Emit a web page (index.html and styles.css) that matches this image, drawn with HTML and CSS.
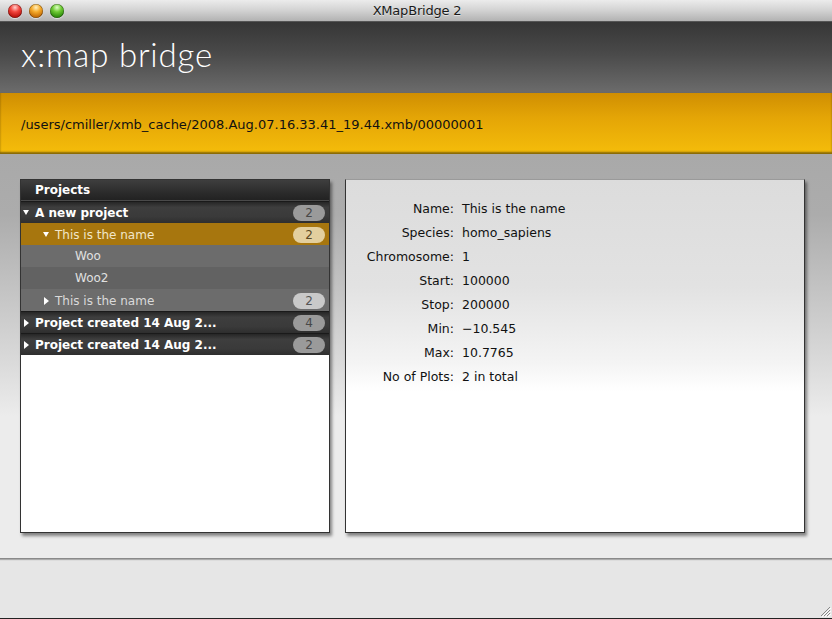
FILE: index.html
```html
<!DOCTYPE html>
<html>
<head>
<meta charset="utf-8">
<title>XMapBridge 2</title>
<link rel="stylesheet" href="styles.css">
</head>
<body>
<div class="window">
  <div class="titlebar">
    <div class="lights">
      <span class="light red"></span>
      <span class="light orange"></span>
      <span class="light green"></span>
    </div>
    <div class="title">XMapBridge 2</div>
  </div>
  <div class="brand"><h1>x:map bridge</h1></div>
  <div class="pathbar">/users/cmiller/xmb_cache/2008.Aug.07.16.33.41_19.44.xmb/00000001</div>
  <div class="main">
    <div class="tree">
      <div class="row head"><span class="label">Projects</span></div>
      <div class="row project open"><span class="tri down"></span><span class="label">A new project</span><span class="count">2</span></div>
      <div class="row child selected open"><span class="tri down"></span><span class="label">This is the name</span><span class="count">2</span></div>
      <div class="row leaf a"><span class="label">Woo</span></div>
      <div class="row leaf b"><span class="label">Woo2</span></div>
      <div class="row child"><span class="tri right"></span><span class="label">This is the name</span><span class="count">2</span></div>
      <div class="row project"><span class="tri right"></span><span class="label">Project created 14 Aug 2...</span><span class="count">4</span></div>
      <div class="row project"><span class="tri right"></span><span class="label">Project created 14 Aug 2...</span><span class="count">2</span></div>
    </div>
    <div class="details">
      <dl class="props">
        <dt>Name:</dt><dd>This is the name</dd>
        <dt>Species:</dt><dd>homo_sapiens</dd>
        <dt>Chromosome:</dt><dd>1</dd>
        <dt>Start:</dt><dd>100000</dd>
        <dt>Stop:</dt><dd>200000</dd>
        <dt>Min:</dt><dd>−10.545</dd>
        <dt>Max:</dt><dd>10.7765</dd>
        <dt>No of Plots:</dt><dd>2 in total</dd>
      </dl>
    </div>
  </div>
  <div class="footer">
    <svg class="grip" width="12" height="12" viewBox="0 0 12 12">
      <path d="M11 2 L2 11 M11 5 L5 11 M11 8 L8 11" stroke="#888" stroke-width="1" fill="none"/>
      <path d="M12 3 L3 12 M12 6 L6 12 M12 9 L9 12" stroke="#fff" stroke-width="1" fill="none"/>
    </svg>
  </div>
</div>
</body>
</html>
```
FILE: styles.css
```css
* { box-sizing: border-box; }
html, body { margin: 0; padding: 0; }
body { width: 832px; height: 619px; overflow: hidden; background: #e6e6e6; font-family: "DejaVu Sans", sans-serif; }

.window { width: 832px; height: 619px; display: flex; flex-direction: column; border-bottom: 1px solid #222; }

.titlebar {
  height: 22px; flex: none; position: relative;
  background: linear-gradient(#ececec, #d2d2d2 50%, #b2b2b2);
  border-bottom: 1px solid #555;
  display: flex; align-items: center; justify-content: center;
}
.lights { position: absolute; left: 8px; top: 4px; display: flex; gap: 7px; }
.light { width: 14px; height: 14px; border-radius: 50%; box-shadow: 0 0 0 0.5px rgba(0,0,0,.45) inset, 0 1px 1px rgba(255,255,255,.6); }
.light.red { background: radial-gradient(circle at 50% 25%, #ffd0cc 0, #f4473f 35%, #b8120c 75%, #d84038 100%); }
.light.orange { background: radial-gradient(circle at 50% 25%, #fff0c0 0, #f6ac2c 35%, #c26a06 75%, #e09430 100%); }
.light.green { background: radial-gradient(circle at 50% 25%, #e0ffc8 0, #6fcb35 35%, #2d8a0c 75%, #58b030 100%); }
.title { font-family: "DejaVu Sans", sans-serif; font-size: 13px; color: #1a1a1a; text-shadow: 0 1px 0 rgba(255,255,255,.5); padding-left: 2px; letter-spacing: -0.2px; }

.brand {
  height: 71px; flex: none;
  background: linear-gradient(#363636, #4a4a4a 45%, #6c6c6c);
  padding-left: 21px;
  display: flex; align-items: flex-start;
}
.brand h1 { margin: 0; padding-top: 12px; font-family: "Lato", sans-serif; font-weight: 300; font-size: 33px; color: #fff; letter-spacing: 0.8px; }

.pathbar {
  height: 61px; flex: none;
  background: linear-gradient(#cf8e02, #e4a506 40%, #f5bd0a);
  box-shadow: 0 -2px 2px rgba(0,0,0,.45) inset, 0 2px 3px rgba(0,0,0,.45);
  position: relative; z-index: 1;
  padding-left: 21px;
  display: flex; align-items: center;
  font-size: 13px; color: #111; padding-top: 1px;
}

.main {
  height: 405px; flex: none;
  background: linear-gradient(#a9a9a9 0, #acacac 15%, #d8d8d8 50%, #ececec 65%, #ececec 100%);
  padding: 25px 0 0 20px;
  display: flex; gap: 15px; align-items: flex-start;
  border-bottom: 1px solid #8a8a8a;
  box-shadow: 0 1px 1px rgba(0,0,0,.25);
  position: relative; z-index: 1;
}

.tree {
  width: 310px; height: 354px;
  background: #fff; border: 1px solid #333;
  box-shadow: 2px 3px 3px rgba(0,0,0,.45);
  font-size: 12px;
}
.row { height: 22px; display: flex; align-items: center; position: relative; color: #e8e8e8; }
.row .label { flex: 1; white-space: nowrap; }
.row.head { height: 21px; background: linear-gradient(#3e3e3e, #2c2c2c 60%, #222); border-bottom: 1px solid #4a4a4a; font-weight: bold; color: #fff; padding-left: 14px; }
.row.project { background: linear-gradient(#262626, #3e3e3e 25%, #3a3a3a 70%, #2e2e2e); border-top: 1px solid #1a1a1a; font-weight: bold; color: #fff; padding-left: 2px; }
.row.child { padding-left: 22px; background: #6c6c6c; color: #dadada; padding-top: 1px; }
.row.child.selected { background: #a7760e; color: #f2e6c8; }
.row.leaf { padding-left: 54px; color: #e0e0e0; }
.row.leaf.a { background: #6c6c6c; }
.row.leaf.b { background: #626262; }
.tri { width: 12px; height: 8px; flex: none; display: flex; align-items: center; justify-content: flex-start; }
.tri.down::before { content: ""; border-left: 3.5px solid transparent; border-right: 3.5px solid transparent; border-top: 5px solid #fff; }
.tri.right::before { content: ""; border-top: 4px solid transparent; border-bottom: 4px solid transparent; border-left: 5px solid #fff; margin-left: 1px; }
.count {
  width: 32px; height: 16px; border-radius: 8px; margin-right: 4px;
  background: #9a9a9a; color: #484848; font-weight: normal; font-size: 12px;
  display: flex; align-items: center; justify-content: center;
}
.row.child .count { background: #c9c9c9; color: #555; }
.row.child.selected .count { background: #e3cf9e; color: #5b4a25; }

.details {
  width: 460px; height: 354px;
  background: linear-gradient(#dcdcdc 0, #e2e2e2 30%, #f4f4f4 52%, #fff 60%, #fff);
  border: 1px solid #333; border-top-color: #9a9a9a;
  box-shadow: 2px 3px 3px rgba(0,0,0,.45);
  padding-top: 19px; padding-left: 1px;
}
.props { margin: 0; display: grid; grid-template-columns: 107px 1fr; column-gap: 8px; row-gap: 0; font-size: 12.5px; color: #111; }
.props dt { text-align: right; height: 24px; line-height: 20px; }
.props dd { margin: 0; height: 24px; line-height: 20px; }

.footer { flex: 1; background: #e6e6e6; position: relative; }
.grip { position: absolute; right: 1px; bottom: 1px; }
```
